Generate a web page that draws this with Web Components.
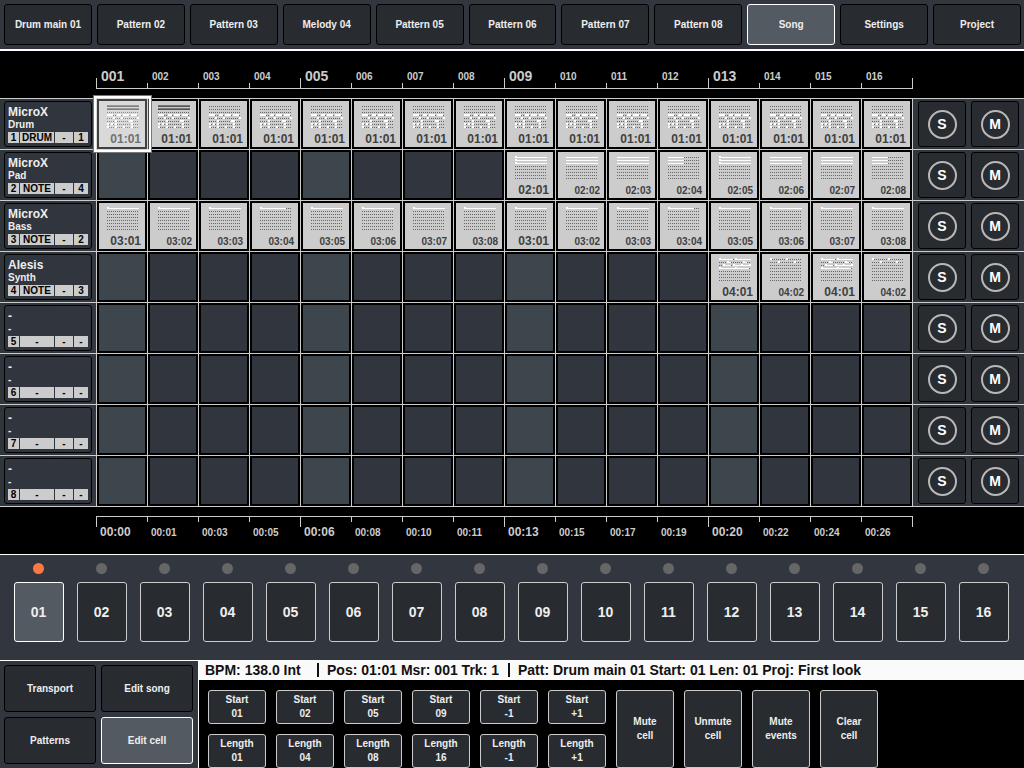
<!DOCTYPE html>
<html lang="en">
<head>
<meta charset="utf-8">
<title>Song sequencer</title>
<style>
  html, body { margin: 0; min-height: 100%; background: #000; }
  body { font: bold 10px/14px "Liberation Sans", Arial, sans-serif; color: #eee; }
</style>
</head>
<body>
<sequencer-app></sequencer-app>
<script>
const LINE = '#ccc';
const RULER_COLUMNS = '96px repeat(16, minmax(0, 1fr)) 112px';
const pad = (n, w = 2) => String(n).padStart(w, '0');

class BaseElement extends HTMLElement {
  constructor() {
    super();
    this.attachShadow({ mode: 'open' });
  }
  connectedCallback() {
    this.shadowRoot.innerHTML = `<style>*{box-sizing:border-box}button{font:inherit;color:inherit;margin:0;padding:0;cursor:pointer}${this.styles()}</style>${this.markup()}`;
  }
  styles() { return ''; }
  markup() { return ''; }
}

/* Push button: attributes "active", "outlined" */
customElements.define('seq-button', class extends BaseElement {
  styles() {
    return `
    :host { display: flex; min-width: 0; }
    button { flex: 1; min-width: 0; border: 1px solid #000; border-radius: 3px; background: #282c30; text-align: center; white-space: pre-line; }
    :host([outlined]) button { border-color: ${LINE}; }
    :host([active]) button { background: #535a62; border-color: #fff; }`;
  }
  markup() {
    return `<button type="button" aria-pressed="${this.hasAttribute('active')}"><slot></slot></button>`;
  }
});

/* Solo / mute button with a ringed letter */
customElements.define('ring-button', class extends BaseElement {
  styles() {
    return `
    :host { display: flex; min-width: 0; }
    button { flex: 1; display: flex; align-items: center; justify-content: center; border: 1px solid #000; border-radius: 3px; background: #282c30; }
    span { width: 29px; height: 29px; border: 2px solid #b8b8b8; border-radius: 50%; font-size: 14px; line-height: 25px; text-align: center; color: #fff; }`;
  }
  markup() { return `<button type="button"><span><slot></slot></span></button>`; }
});

customElements.define('tab-bar', class extends BaseElement {
  styles() {
    return `
    :host { display: block; background: #32363f; border-bottom: 2px solid #fff; }
    nav { display: flex; gap: 5px; padding: 4px 3px 4px 4px; }
    seq-button { flex: 1; height: 41px; }`;
  }
  markup() {
    const tabs = ['Drum main 01', 'Pattern 02', 'Pattern 03', 'Melody 04', 'Pattern 05', 'Pattern 06', 'Pattern 07', 'Pattern 08', 'Song', 'Settings', 'Project'];
    return `<nav>${tabs.map(t => `<seq-button${t === 'Song' ? ' active' : ''}>${t}</seq-button>`).join('')}</nav>`;
  }
});

/* Scale above (measures) or below (time) the song grid */
customElements.define('song-ruler', class extends BaseElement {
  styles() {
    const tick = (side, h) => `linear-gradient(${LINE}, ${LINE}) left ${side} / 1px ${h}px no-repeat`;
    return `
    :host { display: grid; grid-template-columns: ${RULER_COLUMNS}; height: 47px; background: #000; color: ${LINE}; }
    .mark { display: flex; padding-left: 4px; line-height: 14px; }
    :host([kind=measures]) { padding-bottom: 9px; }
    :host([kind=measures]) .mark { align-items: flex-end; padding-left: 5px; padding-bottom: 4px; border-bottom: 1px solid ${LINE}; background: ${tick('bottom', 5)}; }
    :host([kind=measures]) .major { background: ${tick('bottom', 10)}; font-size: 14px; line-height: 16px; }
    :host([kind=measures]) .end { background: ${tick('bottom', 10)}; }
    :host([kind=time]) { padding-top: 9px; }
    :host([kind=time]) .mark { padding-top: 7px; line-height: 18px; border-top: 1px solid ${LINE}; background: ${tick('top', 5)}; }
    :host([kind=time]) .major { background: ${tick('top', 10)}; font-size: 12px; line-height: 16px; }
    :host([kind=time]) .end { background: ${tick('top', 11)}; }
    :host([kind=measures]) .end { background: ${tick('bottom', 11)}; }`;
  }
  markup() {
    const times = [0, 1, 3, 5, 6, 8, 10, 11, 13, 15, 17, 19, 20, 22, 24, 26];
    const labels = times.map((t, i) => this.getAttribute('kind') === 'time' ? '00:' + pad(t) : pad(i + 1, 3));
    return `<span></span>${labels.map((l, i) => `<div class="mark${i % 4 ? '' : ' major'}">${l}</div>`).join('')}<div class="end"></div>`;
  }
});

/* Notes as [row, first step, length in steps, kind]; kind: h = with head, l = line only, b = blocks */
const DRUM = [
  [3, 0, 3, 'b'], [3, 5, 2, 'b'], [3, 8, 3, 'b'], [3, 12, 3, 'b'],
  [4, 3, 1, 'b'], [4, 7, 1, 'b'], [4, 15, 1, 'b'],
  [5, 4, 1, 'b'], [5, 11, 2, 'b'],
  [6, 0, 1, 'b'], [6, 2, 1, 'b'], [6, 4, 1, 'b'], [6, 12, 1, 'b'],
  [7, 0, 1, 'b'], [7, 4, 1, 'b'], [7, 8, 1, 'b'], [7, 12, 1, 'b']
];
function notesFor(id) {
  const [p, n] = id.split(':').map(Number);
  if (p === 1) return DRUM;
  if (p === 2) return [0, 1, 2].map(r => [r, 0, n % 4 ? 16 : 8, n % 4 === 1 ? 'h' : 'l']);
  if (p === 3) return [[0, 0, n === 4 ? 13 : 16, 'h']];
  if (n === 1) return [
    [0, 0, 7, 'h'], [0, 8, 8, 'h'], [1, 4, 2, 'h'], [1, 12, 2, 'h'],
    [2, 2, 4, 'h'], [2, 7, 4, 'h'], [2, 11, 4, 'h'], [2, 15, 1, 'b'],
    [3, 0, 8, 'h'], [3, 8, 7, 'h']];
  return [[0, 0, 1, 'b'], [0, 8, 1, 'b'], [1, 4, 1, 'b'], [1, 12, 1, 'b']];
}

/* One cell of the song grid */
customElements.define('song-cell', class extends BaseElement {
  styles() {
    return `
    :host { display: flex; position: relative; min-width: 0; padding: 2px; background: #000; border-left: 1px solid ${LINE}; }
    button { flex: 1; min-width: 0; border: 0; background: #31353d; display: flex; flex-direction: column; align-items: stretch; }
    :host([major]) button { background: #3e464d; }
    :host([pattern]) button { background: ${LINE}; padding: 4px 4px 0 8px; gap: 4px; justify-content: flex-start; }
    svg { display: block; flex: none; }
    time { color: #404040; text-align: right; line-height: 14px; font-size: 10px; }
    :host([large]) time { font-size: 12px; line-height: 12px; }
    :host([selected]) { z-index: 1; }
    :host([selected])::after { content: ""; position: absolute; inset: -4px -5px -4px -4px; border: 3px solid #fff; outline: 1px solid #777; outline-offset: -1px; background: rgba(255,255,255,.25); pointer-events: none; }`;
  }
  markup() {
    const id = this.getAttribute('pattern');
    if (!id) return `<button type="button" aria-label="Empty cell"></button>`;
    let shapes = '';
    for (let r = 0; r < 8; r++) {
      if (this.hasAttribute('accent') && r < 2) {
        shapes += `<path d="M0 ${r * 3}h32v1h-32z" fill="#777"/><path d="M0 ${r * 3 + 1}h32v1h-32z" fill="#555"/>`;
      } else {
        let d = '';
        for (let s = 0; s < 16; s++) d += `M${s * 2} ${r * 3 + 1}h1v1h-1z`;
        shapes += `<path d="${d}" fill="#666"/>`;
      }
    }
    for (const [r, s, len, kind] of notesFor(id)) {
      const x = s * 2, y = r * 3;
      if (kind === 'b') shapes += `<path d="M${x} ${y}h${len * 2}v2h-${len * 2}z" fill="#fff"/>`;
      else {
        shapes += `<path d="M${x} ${y + 1}h${len * 2}v1h-${len * 2}z" fill="#fff"/>`;
        if (kind === 'h') shapes += `<path d="M${x} ${y}h2v1h-2z" fill="#fff"/>`;
      }
    }
    return `<button type="button"><svg width="32" height="24" viewBox="0 0 32 24" shape-rendering="crispEdges" aria-hidden="true">${shapes}</svg><time>${id}</time></button>`;
  }
});

customElements.define('track-card', class extends BaseElement {
  styles() {
    return `
    :host { display: flex; padding: 2px 4px; background: linear-gradient(90deg, #2f363c, #34373f); }
    button { flex: 1; min-width: 0; padding: 3px; border: 1px solid #000; border-radius: 3px; background: #31353d; text-align: left; display: flex; flex-direction: column; }
    .name { font-size: 12px; line-height: 14px; }
    .part { line-height: 12px; padding-bottom: 1px; }
    .info { display: grid; grid-template-columns: 11px 34px 18px 14px; gap: 1px; line-height: 11px; color: #000; text-align: center; }
    .info span { background: ${LINE}; height: 11px; overflow: hidden; }`;
  }
  markup() {
    const a = n => this.getAttribute(n) || '-';
    return `<button type="button"><span class="name">${a('name')}</span><span class="part">${a('part')}</span><span class="info"><span>${a('number')}</span><span>${a('mode')}</span><span>-</span><span>${a('channel')}</span></span></button>`;
  }
});

const TRACKS = [
  { name: 'MicroX', part: 'Drum', mode: 'DRUM', channel: 1, cell: () => '01:01' },
  { name: 'MicroX', part: 'Pad', mode: 'NOTE', channel: 4, cell: i => i < 8 ? '' : '02:' + pad(i - 7) },
  { name: 'MicroX', part: 'Bass', mode: 'NOTE', channel: 2, cell: i => '03:' + pad(i % 8 + 1) },
  { name: 'Alesis', part: 'Synth', mode: 'NOTE', channel: 3, cell: i => i < 12 ? '' : '04:' + pad(i % 2 + 1) },
  {}, {}, {}, {}
];

customElements.define('song-grid', class extends BaseElement {
  styles() {
    return `
    :host { display: block; border-bottom: 1px solid ${LINE}; }
    .row { display: grid; grid-template-columns: ${RULER_COLUMNS}; height: 51px; border-top: 1px solid ${LINE}; }
    .switches { display: flex; gap: 5px; padding: 2px 5px; border-left: 1px solid ${LINE}; background: linear-gradient(90deg, #2f363c, #34373f); }
    ring-button { flex: 1; }`;
  }
  markup() {
    return TRACKS.map((t, row) => {
      let cells = '';
      for (let i = 0; i < 16; i++) {
        const id = t.cell ? t.cell(i) : '';
        cells += `<song-cell${i % 4 ? '' : ' major'}${id ? ` pattern="${id}"` : ''}${id.endsWith(':01') ? ' large' : ''}${row === 0 && i < 2 ? ' accent' : ''}${row === 0 && i === 0 ? ' selected' : ''}></song-cell>`;
      }
      return `<div class="row"><track-card number="${row + 1}" name="${t.name || ''}" part="${t.part || ''}" mode="${t.mode || ''}" channel="${t.channel || ''}"></track-card>${cells}<div class="switches"><ring-button>S</ring-button><ring-button>M</ring-button></div></div>`;
    }).join('');
  }
});

customElements.define('step-pads', class extends BaseElement {
  styles() {
    return `
    :host { display: grid; grid-template-columns: repeat(16, minmax(0, 1fr)); height: 106px; padding: 8px 9px 0 7px; border-top: 1px solid #fff; background: #32363f; }
    .step { display: flex; flex-direction: column; align-items: center; gap: 8px; }
    i { width: 11px; height: 11px; border-radius: 50%; background: #666; }
    .on i { background: #ff7840; }
    seq-button { width: 50px; height: 60px; font-size: 14px; }`;
  }
  markup() {
    return Array.from({ length: 16 }, (_, i) => `<div class="step${i ? '' : ' on'}"><i></i><seq-button outlined${i ? '' : ' active'}>${pad(i + 1)}</seq-button></div>`).join('');
  }
});

customElements.define('mode-panel', class extends BaseElement {
  styles() {
    return `
    :host { display: grid; grid-template: 47px 47px / 1fr 1fr; gap: 5px; padding: 4px 5px 4px 4px; border-top: 1px solid #fff; background: #32363f; }`;
  }
  markup() {
    return `<seq-button>Transport</seq-button><seq-button>Edit song</seq-button><seq-button>Patterns</seq-button><seq-button active>Edit cell</seq-button>`;
  }
});

customElements.define('status-bar', class extends BaseElement {
  styles() {
    return `
    :host { display: flex; height: 20px; padding-left: 6px; background: #fafafa; color: #111; font-size: 14px; line-height: 20px; white-space: nowrap; }
    span + span { margin-left: 9px; padding-left: 10px; background: linear-gradient(#111, #111) left center / 2px 14px no-repeat; }
    .tempo { min-width: 103px; }`;
  }
  markup() {
    return `<span class="tempo">BPM: 138.0 Int</span><span>Pos: 01:01 Msr: 001 Trk: 1</span><span>Patt: Drum main 01 Start: 01 Len: 01 Proj: First look</span>`;
  }
});

customElements.define('cell-actions', class extends BaseElement {
  styles() {
    return `
    :host { display: grid; grid-template-rows: 34px 34px; grid-auto-columns: 58px; grid-auto-flow: column; gap: 10px; padding: 10px 9px 0; }
    .tall { grid-row: span 2; }`;
  }
  markup() {
    const pairs = [['01', '01'], ['02', '04'], ['05', '08'], ['09', '16'], ['-1', '-1'], ['+1', '+1']];
    const b = (label, cls = '') => `<seq-button outlined class="${cls}">${label}</seq-button>`;
    return pairs.map(([s, l]) => b('Start\n' + s) + b('Length\n' + l)).join('') +
      ['Mute\ncell', 'Unmute\ncell', 'Mute\nevents', 'Clear\ncell'].map(l => b(l, 'tall')).join('');
  }
});

customElements.define('sequencer-app', class extends BaseElement {
  styles() {
    return `
    :host { display: block; }
    footer { display: grid; grid-template-columns: 198px 1fr; }
    .right { border-left: 1px solid #fff; min-width: 0; }`;
  }
  markup() {
    return `<tab-bar></tab-bar><main><song-ruler kind="measures"></song-ruler><song-grid></song-grid><song-ruler kind="time"></song-ruler><step-pads></step-pads></main>
    <footer><mode-panel></mode-panel><div class="right"><status-bar></status-bar><cell-actions></cell-actions></div></footer>`;
  }
});
</script>
</body>
</html>
